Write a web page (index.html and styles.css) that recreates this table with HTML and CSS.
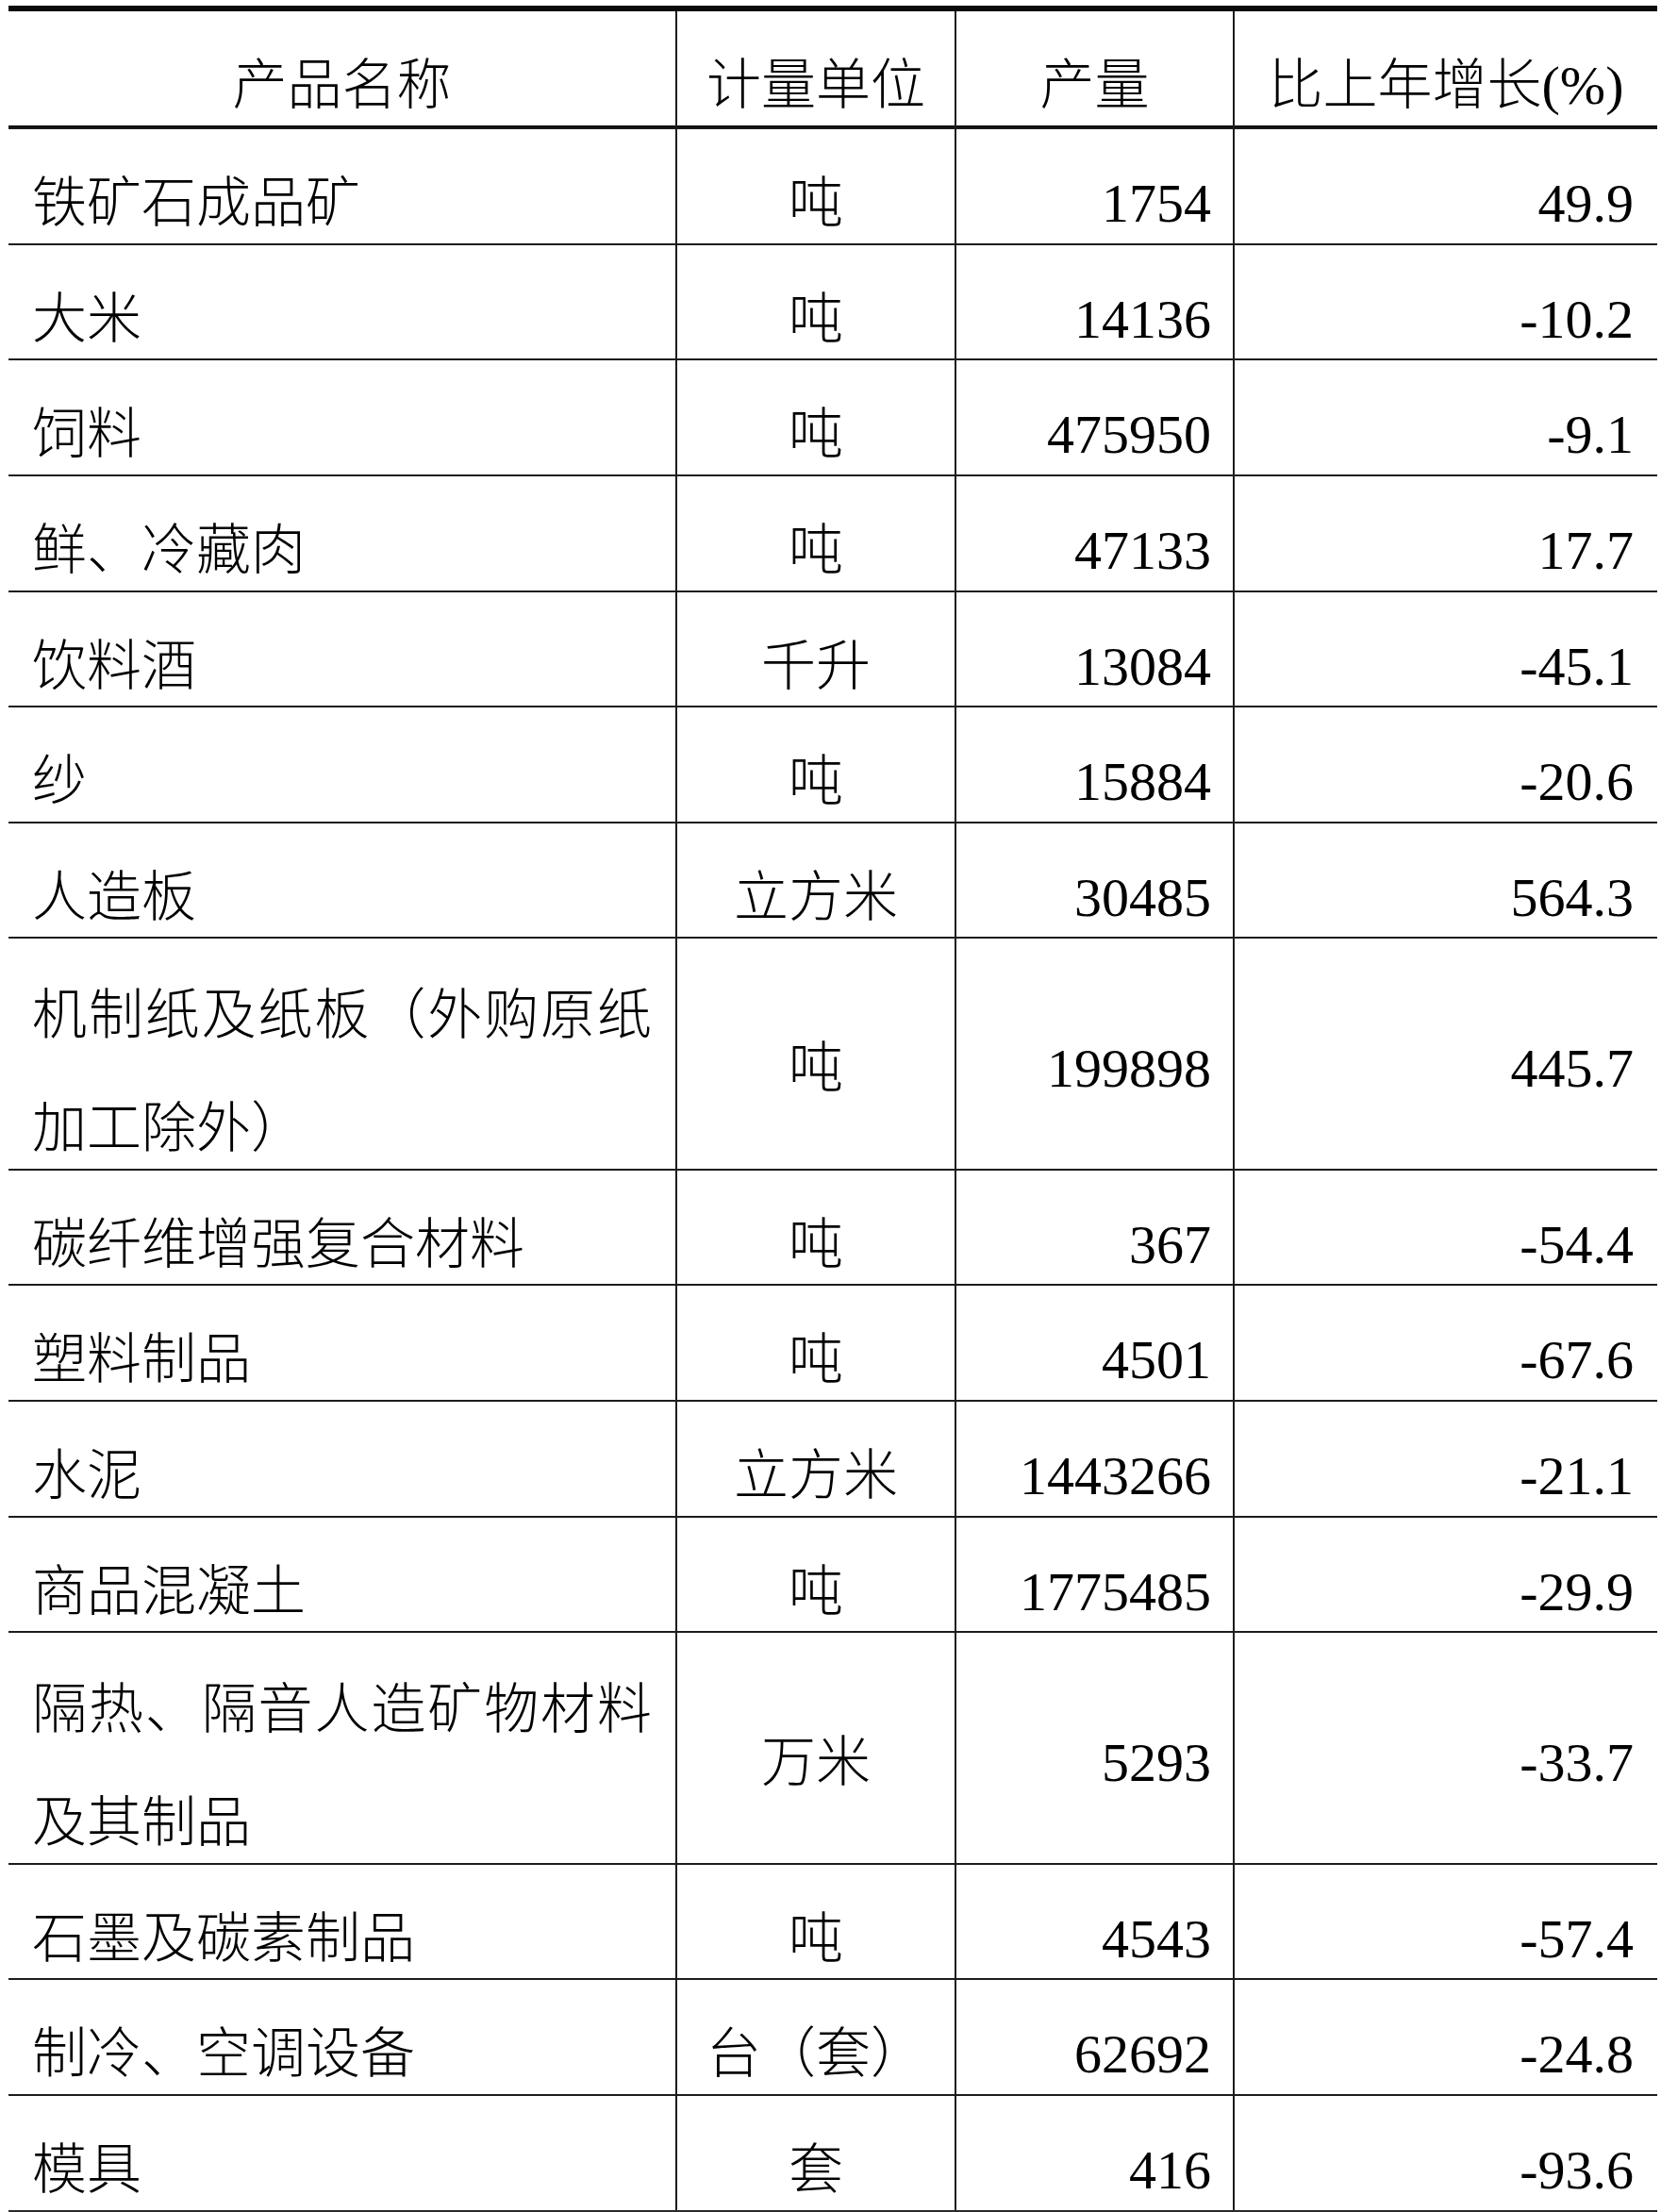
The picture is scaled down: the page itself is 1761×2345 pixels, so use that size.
FILE: index.html
```html
<!DOCTYPE html>
<html lang="zh-CN">
<head>
<meta charset="utf-8">
<title>主要工业产品产量</title>
<link rel="stylesheet" href="styles.css">
</head>
<body>
<div class="sheet">
  <div class="cell head">产品名称</div>
  <div class="cell head">计量单位</div>
  <div class="cell head">产量</div>
  <div class="cell head">比上年增长(%)</div>

  <div class="cell name">铁矿石成品矿</div><div class="cell unit">吨</div><div class="cell num">1754</div><div class="cell num">49.9</div>
  <div class="cell name">大米</div><div class="cell unit">吨</div><div class="cell num">14136</div><div class="cell num">-10.2</div>
  <div class="cell name">饲料</div><div class="cell unit">吨</div><div class="cell num">475950</div><div class="cell num">-9.1</div>
  <div class="cell name">鲜、冷藏肉</div><div class="cell unit">吨</div><div class="cell num">47133</div><div class="cell num">17.7</div>
  <div class="cell name">饮料酒</div><div class="cell unit">千升</div><div class="cell num">13084</div><div class="cell num">-45.1</div>
  <div class="cell name">纱</div><div class="cell unit">吨</div><div class="cell num">15884</div><div class="cell num">-20.6</div>
  <div class="cell name">人造板</div><div class="cell unit">立方米</div><div class="cell num">30485</div><div class="cell num">564.3</div>
  <div class="cell name double">机制纸及纸板（外购原纸加工除外）</div><div class="cell unit mid">吨</div><div class="cell num mid">199898</div><div class="cell num mid">445.7</div>
  <div class="cell name">碳纤维增强复合材料</div><div class="cell unit">吨</div><div class="cell num">367</div><div class="cell num">-54.4</div>
  <div class="cell name">塑料制品</div><div class="cell unit">吨</div><div class="cell num">4501</div><div class="cell num">-67.6</div>
  <div class="cell name">水泥</div><div class="cell unit">立方米</div><div class="cell num">1443266</div><div class="cell num">-21.1</div>
  <div class="cell name">商品混凝土</div><div class="cell unit">吨</div><div class="cell num">1775485</div><div class="cell num">-29.9</div>
  <div class="cell name double">隔热、隔音人造矿物材料及其制品</div><div class="cell unit mid">万米</div><div class="cell num mid">5293</div><div class="cell num mid">-33.7</div>
  <div class="cell name">石墨及碳素制品</div><div class="cell unit">吨</div><div class="cell num">4543</div><div class="cell num">-57.4</div>
  <div class="cell name">制冷、空调设备</div><div class="cell unit">台（套）</div><div class="cell num">62692</div><div class="cell num">-24.8</div>
  <div class="cell name">模具</div><div class="cell unit">套</div><div class="cell num">416</div><div class="cell num">-93.6</div>
</div>
</body>
</html>
```
FILE: styles.css
```css
html, body {
  margin: 0;
  padding: 0;
  background: #ffffff;
}

.sheet {
  margin: 6px 0 0 9px;
  width: 1748px;
  display: grid;
  grid-template-columns: 707px 294px 293px 448px;
  grid-template-rows: 123px repeat(7, 120.65px) 243.3px repeat(4, 120.65px) 243.3px repeat(3, 120.65px);
  gap: 2px;
  background: #1c1c1c;
  border-top: 6px solid #0a0a0a;
  border-bottom: 2px solid #2a2a2a;
  font-family: "Liberation Serif", "Noto Sans CJK SC", serif;
  font-size: 58px;
  font-weight: 300;
  color: #000000;
}

.cell {
  background: #ffffff;
  line-height: 120px;
  padding: 19px 25px 0 25px;
  overflow: visible;
  white-space: normal;
}

.head {
  text-align: center;
  border-bottom: 2px solid #0a0a0a;
  padding-left: 0;
  padding-right: 0;
}

.name {
  text-align: left;
}

.double {
  text-align: justify;
  text-justify: inter-character;
  padding-top: 22px;
}

.unit {
  text-align: center;
  padding-left: 0;
  padding-right: 0;
}

.num {
  text-align: right;
  padding-right: 23px;
}

.num:nth-child(4n) {
  padding-right: 25px;
}

.mid {
  display: flex;
  align-items: center;
  padding-top: 32px;
}

.unit.mid {
  justify-content: center;
}

.num.mid {
  justify-content: flex-end;
}
```
